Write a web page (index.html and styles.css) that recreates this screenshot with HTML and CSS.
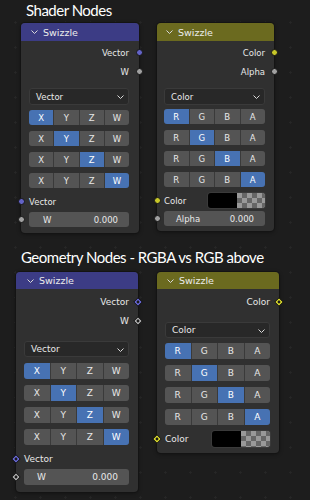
FILE: index.html
```html
<!DOCTYPE html>
<html>
<head>
<meta charset="utf-8">
<link rel="stylesheet" href="styles.css">
</head>
<body>
<section class="sec sec-shader">
  <h1 class="title">Shader Nodes</h1>
  <div class="nodes">
    <div class="node n1 vec">
      <div class="hdr"><svg class="chev" width="7" height="4" viewBox="0 0 7 4"><polyline points="0.5,0.5 3.5,3.5 6.5,0.5"/></svg><span>Swizzle</span></div>
      <div class="body">
        <div class="out"><span>Vector</span><i class="sock c-vec"></i></div>
        <div class="out"><span>W</span><i class="sock c-gray"></i></div>
        <div class="dd"><span>Vector</span><svg class="ddchev" width="7" height="4" viewBox="0 0 7 4"><polyline points="0.5,0.5 3.5,3.5 6.5,0.5"/></svg></div>
        <div class="btns">
          <div class="seg"><b class="on">X</b><b>Y</b><b>Z</b><b>W</b></div>
          <div class="seg"><b>X</b><b class="on">Y</b><b>Z</b><b>W</b></div>
          <div class="seg"><b>X</b><b>Y</b><b class="on">Z</b><b>W</b></div>
          <div class="seg"><b>X</b><b>Y</b><b>Z</b><b class="on">W</b></div>
        </div>
        <div class="in"><i class="sock c-vec"></i><span>Vector</span></div>
        <div class="field"><i class="sock c-gray"></i><span class="flab">W</span><span>0.000</span></div>
      </div>
    </div>
    <div class="node n2 col">
      <div class="hdr"><svg class="chev" width="7" height="4" viewBox="0 0 7 4"><polyline points="0.5,0.5 3.5,3.5 6.5,0.5"/></svg><span>Swizzle</span></div>
      <div class="body">
        <div class="out"><span>Color</span><i class="sock c-yel"></i></div>
        <div class="out"><span>Alpha</span><i class="sock c-gray"></i></div>
        <div class="dd"><span>Color</span><svg class="ddchev" width="7" height="4" viewBox="0 0 7 4"><polyline points="0.5,0.5 3.5,3.5 6.5,0.5"/></svg></div>
        <div class="btns">
          <div class="seg"><b class="on">R</b><b>G</b><b>B</b><b>A</b></div>
          <div class="seg"><b>R</b><b class="on">G</b><b>B</b><b>A</b></div>
          <div class="seg"><b>R</b><b>G</b><b class="on">B</b><b>A</b></div>
          <div class="seg"><b>R</b><b>G</b><b>B</b><b class="on">A</b></div>
        </div>
        <div class="in colrow"><i class="sock c-yel"></i><span>Color</span><div class="swatch"><span class="blk"></span><span class="chk"></span></div></div>
        <div class="field"><i class="sock c-gray"></i><span class="flab">Alpha</span><span>0.000</span></div>
      </div>
    </div>
  </div>
</section>
<section class="sec sec-geo">
  <h1 class="title">Geometry Nodes - RGBA vs RGB above</h1>
  <div class="nodes">
    <div class="node n3 vec">
      <div class="hdr"><svg class="chev" width="7" height="4" viewBox="0 0 7 4"><polyline points="0.5,0.5 3.5,3.5 6.5,0.5"/></svg><span>Swizzle</span></div>
      <div class="body">
        <div class="out"><span>Vector</span><svg class="dia" width="10" height="10" viewBox="0 0 10 10"><polygon class="d-vec" points="5,0.8 9.2,5 5,9.2 0.8,5"/><circle cx="5" cy="5" r="1.4"/></svg></div>
        <div class="out"><span>W</span><svg class="dia" width="10" height="10" viewBox="0 0 10 10"><polygon class="d-gray" points="5,0.8 9.2,5 5,9.2 0.8,5"/><circle cx="5" cy="5" r="1.4"/></svg></div>
        <div class="dd"><span>Vector</span><svg class="ddchev" width="7" height="4" viewBox="0 0 7 4"><polyline points="0.5,0.5 3.5,3.5 6.5,0.5"/></svg></div>
        <div class="btns">
          <div class="seg"><b class="on">X</b><b>Y</b><b>Z</b><b>W</b></div>
          <div class="seg"><b>X</b><b class="on">Y</b><b>Z</b><b>W</b></div>
          <div class="seg"><b>X</b><b>Y</b><b class="on">Z</b><b>W</b></div>
          <div class="seg"><b>X</b><b>Y</b><b>Z</b><b class="on">W</b></div>
        </div>
        <div class="in"><svg class="dia" width="10" height="10" viewBox="0 0 10 10"><polygon class="d-vec" points="5,0.8 9.2,5 5,9.2 0.8,5"/><circle cx="5" cy="5" r="1.4"/></svg><span>Vector</span></div>
        <div class="field"><svg class="dia" width="10" height="10" viewBox="0 0 10 10"><polygon class="d-gray" points="5,0.8 9.2,5 5,9.2 0.8,5"/><circle cx="5" cy="5" r="1.4"/></svg><span class="flab">W</span><span>0.000</span></div>
      </div>
    </div>
    <div class="node n4 col">
      <div class="hdr"><svg class="chev" width="7" height="4" viewBox="0 0 7 4"><polyline points="0.5,0.5 3.5,3.5 6.5,0.5"/></svg><span>Swizzle</span></div>
      <div class="body">
        <div class="out"><span>Color</span><svg class="dia" width="10" height="10" viewBox="0 0 10 10"><polygon class="d-yel" points="5,0.8 9.2,5 5,9.2 0.8,5"/><circle cx="5" cy="5" r="1.4"/></svg></div>
        <div class="dd"><span>Color</span><svg class="ddchev" width="7" height="4" viewBox="0 0 7 4"><polyline points="0.5,0.5 3.5,3.5 6.5,0.5"/></svg></div>
        <div class="btns">
          <div class="seg"><b class="on">R</b><b>G</b><b>B</b><b>A</b></div>
          <div class="seg"><b>R</b><b class="on">G</b><b>B</b><b>A</b></div>
          <div class="seg"><b>R</b><b>G</b><b class="on">B</b><b>A</b></div>
          <div class="seg"><b>R</b><b>G</b><b>B</b><b class="on">A</b></div>
        </div>
        <div class="in colrow"><svg class="dia" width="10" height="10" viewBox="0 0 10 10"><polygon class="d-yel" points="5,0.8 9.2,5 5,9.2 0.8,5"/><circle cx="5" cy="5" r="1.4"/></svg><span>Color</span><div class="swatch"><span class="blk"></span><span class="chk"></span></div></div>
      </div>
    </div>
  </div>
</section>
</body>
</html>
```
FILE: styles.css
```css
html, body {
  margin: 0;
  padding: 0;
}
body {
  width: 310px;
  height: 500px;
  overflow: hidden;
  background-color: #1d1d1d;
  background-image: radial-gradient(circle, #272727 0.9px, transparent 1.4px);
  background-size: 25px 25px;
  background-position: 3px 10px;
  font-family: "DejaVu Sans", sans-serif;
  color: #e8e8e8;
}
.title {
  margin: 0;
  font-family: Lato, "Open Sans", sans-serif;
  font-weight: 400;
  font-size: 15px;
  line-height: 20px;
  letter-spacing: -0.5px;
  color: #ffffff;
  white-space: nowrap;
}
.sec-shader { padding-left: 21px; }
.sec-shader .title { margin-left: 5px; }
.sec-shader .nodes { margin-top: 3px; gap: 18px; }
.sec-geo { padding-left: 16px; margin-top: 14px; }
.sec-geo .title { margin-left: 5px; }
.sec-geo .nodes { margin-top: 5px; gap: 19px; }

.nodes {
  display: flex;
  align-items: flex-start;
}
.node {
  --pl: 8px;
  --pr: 10px;
  --hh: 18px;
  --bh: 15px;
  background: #303030;
  border-radius: 4px;
  box-shadow: 0 0 0 1px #141414, 0 1px 4px rgba(0,0,0,0.45);
  font-size: 8.5px;
}
.n1 { width: 118px; }
.n2 { width: 117px; --pl: 7px; --pr: 9px; }
.n3 { width: 122px; --pr: 9px; --hh: 17px; --bh: 16px; font-size: 9px; }
.n4 { width: 122px; --pr: 9px; --hh: 17px; --bh: 16px; font-size: 9px; }

.hdr {
  height: var(--hh);
  border-radius: 4px 4px 0 0;
  display: flex;
  align-items: center;
  padding-left: 10px;
  gap: 5px;
  color: #ececec;
  font-size: 9.5px;
}
.vec .hdr { background: #3c3c85; }
.col .hdr { background: #6b6a1f; }
.n2 .hdr { padding-left: 9px; }
.n3 .hdr { padding-left: 11px; }
.chev polyline, .ddchev polyline {
  fill: none;
  stroke: #d8d8d8;
  stroke-width: 1;
}
.body {
  padding: 2px var(--pr) 6px var(--pl);
}
.n2 .body { padding-bottom: 5px; }
.n3 .body { padding-top: 3px; padding-bottom: 7px; }
.n4 .body { padding-top: 3px; padding-bottom: 5px; }

.out, .in {
  position: relative;
  height: 19px;
  display: flex;
  align-items: center;
}
.out { justify-content: flex-end; }
.sock {
  position: absolute;
  top: 50%;
  width: 7px;
  height: 7px;
  margin-top: -3.5px;
  border-radius: 50%;
  box-sizing: border-box;
  border: 1px solid #151515;
}
.out .sock { right: calc(-1 * var(--pr) - 3.5px); }
.in .sock, .field .sock { left: calc(-1 * var(--pl) - 3.5px); }
.dia {
  position: absolute;
  top: 50%;
  margin-top: -5px;
}
.out .dia { right: calc(-1 * var(--pr) - 5px); }
.in .dia, .field .dia { left: calc(-1 * var(--pl) - 5px); }
.dia polygon { stroke: #111; stroke-width: 1; }
.dia circle { fill: #1a1a1a; }
.c-vec { background: #6363c7; }
.c-gray { background: #a1a1a1; }
.c-yel { background: #c7c729; }
.d-vec { fill: #6565d0; }
.d-gray { fill: #a8a8a8; }
.d-yel { fill: #d4d42a; }

.dd {
  margin-top: 7px;
  height: 17px;
  box-sizing: border-box;
  background: #282828;
  border: 1px solid #3a3a3a;
  border-radius: 3px;
  display: flex;
  align-items: center;
  justify-content: space-between;
  padding: 0 4px 0 6px;
}
.n3 .dd, .n4 .dd { margin-top: 11px; height: 16px; }
.ddchev { margin-top: 1px; }

.btns {
  margin-top: 5px;
  display: flex;
  flex-direction: column;
  gap: 6px;
}
.n2 .btns { margin-top: 4px; }
.n3 .btns { margin-top: 6px; }
.seg {
  height: var(--bh);
  display: grid;
  grid-template-columns: repeat(4, 1fr);
  gap: 1px;
  background: #3a3a3a;
  border-radius: 3px;
  overflow: hidden;
}
.seg b {
  font-weight: 400;
  background: #545454;
  display: flex;
  align-items: center;
  justify-content: center;
  color: #e8e8e8;
}
.seg b.on {
  background: #4772b3;
  color: #ffffff;
}
.in { margin-top: 4px; }
.colrow { justify-content: space-between; }
.swatch {
  width: 57px;
  height: 15px;
  display: flex;
  border-radius: 3px;
  overflow: hidden;
  box-shadow: 0 0 0 1px #3a3a3a;
}
.n4 .swatch { width: 58px; height: 16px; }
.blk { flex: 1; background: #000; }
.chk {
  flex: 1;
  background-color: #999999;
  background-image: conic-gradient(#666666 25%, transparent 0 50%, #666666 0 75%, transparent 0);
  background-size: 10px 10px;
}
.field {
  position: relative;
  margin-top: 1px;
  height: var(--bh);
  background: #545454;
  border-radius: 3px;
  display: flex;
  align-items: center;
  justify-content: space-between;
  padding: 0 11px 0 14px;
  color: #e8e8e8;
}
.n2 .field { padding-left: 12px; }
.n3 .field { padding-left: 13px; }
```
